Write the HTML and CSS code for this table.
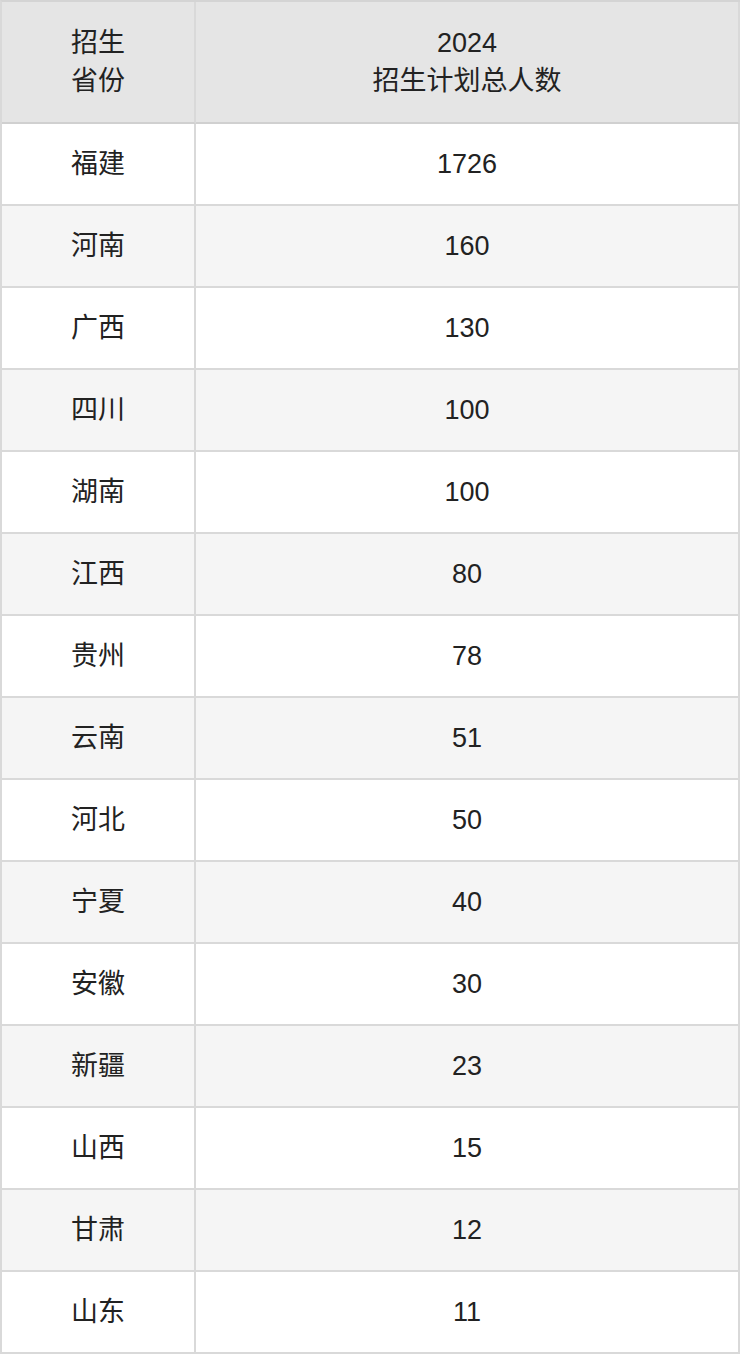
FILE: index.html
```html
<!DOCTYPE html>
<html lang="zh-CN">
<head>
<meta charset="utf-8">
<title>招生计划</title>
<link rel="stylesheet" href="styles.css">
</head>
<body>
<table class="plan">
  <thead>
    <tr><th class="prov">招生<br>省份</th><th class="num">2024<br>招生计划总人数</th></tr>
  </thead>
  <tbody>
    <tr><td class="prov">福建</td><td class="num">1726</td></tr>
    <tr><td class="prov">河南</td><td class="num">160</td></tr>
    <tr><td class="prov">广西</td><td class="num">130</td></tr>
    <tr><td class="prov">四川</td><td class="num">100</td></tr>
    <tr><td class="prov">湖南</td><td class="num">100</td></tr>
    <tr><td class="prov">江西</td><td class="num">80</td></tr>
    <tr><td class="prov">贵州</td><td class="num">78</td></tr>
    <tr><td class="prov">云南</td><td class="num">51</td></tr>
    <tr><td class="prov">河北</td><td class="num">50</td></tr>
    <tr><td class="prov">宁夏</td><td class="num">40</td></tr>
    <tr><td class="prov">安徽</td><td class="num">30</td></tr>
    <tr><td class="prov">新疆</td><td class="num">23</td></tr>
    <tr><td class="prov">山西</td><td class="num">15</td></tr>
    <tr><td class="prov">甘肃</td><td class="num">12</td></tr>
    <tr><td class="prov">山东</td><td class="num">11</td></tr>
  </tbody>
</table>
</body>
</html>
```
FILE: styles.css
```css
html, body {
  margin: 0;
  padding: 0;
  background: #ffffff;
}
.plan {
  width: 740px;
  table-layout: fixed;
  border-collapse: separate;
  border-spacing: 0;
  border-top: 2px solid #d4d4d4;
  border-left: 2px solid #d9d9d9;
  font-family: "Liberation Sans", "Noto Sans CJK SC", sans-serif;
  font-size: 27px;
  color: #222222;
}
.plan th, .plan td {
  box-sizing: border-box;
  border-right: 2px solid #d9d9d9;
  border-bottom: 2px solid #d9d9d9;
  text-align: center;
  vertical-align: middle;
  font-weight: normal;
  line-height: 38px;
  padding: 21px 0;
}
.plan th {
  background: #e5e5e5;
  padding: 22px 0;
  border-bottom-color: #d0d0d0;
}
.plan .prov {
  width: 194px;
}
.plan tbody tr:nth-child(even) td {
  background: #f5f5f5;
}
```
